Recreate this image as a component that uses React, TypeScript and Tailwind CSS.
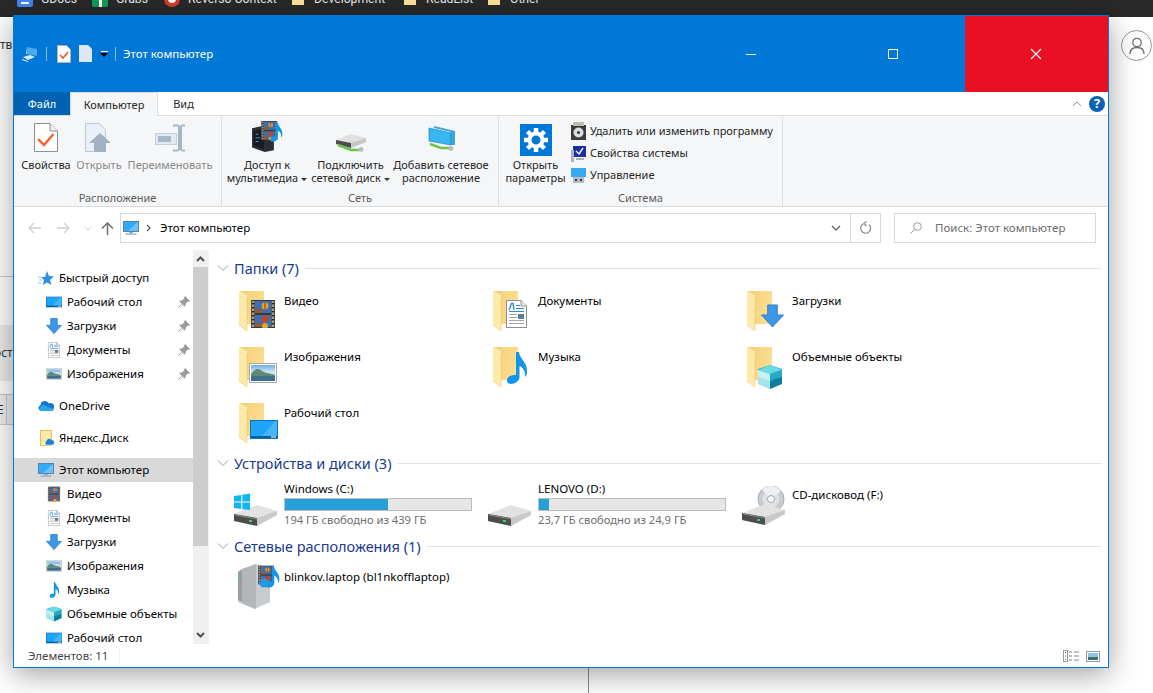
import React from "react";

const FolderBase = ({ children }: { children?: React.ReactNode }) => (
  <svg width="45" height="44" viewBox="0 0 45 44" className="shrink-0">
    <defs>
      <linearGradient id="fb" x1="0" y1="0" x2="1" y2="0.3">
        <stop offset="0" stopColor="#f3cf78" />
        <stop offset="1" stopColor="#fbdd8f" />
      </linearGradient>
    </defs>
    <path d="M0 0H25V33H8V5Z" fill="url(#fb)" />
    <path d="M0 0L8 6V40L0 34Z" fill="#fdeaa9" />
    <path d="M8 6V40L0 34" fill="none" stroke="#eec66c" strokeWidth="0.6" />
    {children}
  </svg>
);

const Film = ({ x, y, w, h }: { x: number; y: number; w: number; h: number }) => (
  <svg x={x} y={y} width={w} height={h} viewBox="0 0 24 28">
    <rect width="24" height="28" fill="#3a3a34" />
    <rect x="0.8" y="1" width="2.6" height="26" fill="#a8a090" />
    <rect x="20.6" y="1" width="2.6" height="26" fill="#a8a090" />
    {[3, 7, 11, 15, 19, 23].map((v) => (
      <g key={v}>
        <rect x="1" y={v} width="2.4" height="1.4" fill="#222" />
        <rect x="20.8" y={v} width="2.4" height="1.4" fill="#222" />
      </g>
    ))}
    <rect x="4" y="1" width="16" height="12" fill="#3f6fb0" />
    <rect x="4" y="15" width="16" height="12" fill="#3f6fb0" />
    <rect x="4" y="9" width="7" height="4" fill="#8d5a3d" />
    <rect x="4" y="23" width="7" height="4" fill="#8d5a3d" />
    <circle cx="14" cy="6" r="3.4" fill="#d9a62a" />
    <rect x="13.4" y="2.6" width="1.2" height="7" fill="#b23a2c" />
    <circle cx="14" cy="19" r="3.4" fill="#c8402e" />
    <circle cx="14" cy="26" r="3" fill="#d9a62a" />
  </svg>
);

const DocPic = ({ x, y, w, h }: { x: number; y: number; w: number; h: number }) => (
  <svg x={x} y={y} width={w} height={h} viewBox="0 0 21 28">
    <path d="M.5.5H15L20.5 6V27.5H.5Z" fill="#fff" stroke="#8f8f8f" />
    <path d="M15 .5V6H20.5" fill="#e8e8e8" stroke="#8f8f8f" />
    <path d="M3 10L5.5 3.5H7L8 10" fill="none" stroke="#2d86d6" strokeWidth="1.3" />
    <rect x="10" y="5" width="4" height="1" fill="#2d86d6" />
    <rect x="10" y="8" width="8" height="1" fill="#2d86d6" />
    <rect x="3" y="11" width="15" height="1" fill="#2d86d6" />
    <rect x="3" y="14" width="8" height="1" fill="#a5a5a5" />
    <rect x="12" y="14" width="6" height="5" fill="#5b7f94" />
    <rect x="3" y="17" width="8" height="1" fill="#a5a5a5" />
    <rect x="3" y="20" width="15" height="1" fill="#a5a5a5" />
    <rect x="3" y="23" width="15" height="1" fill="#a5a5a5" />
  </svg>
);

const DownArr = ({ x, y, w, h }: { x: number; y: number; w: number; h: number }) => (
  <svg x={x} y={y} width={w} height={h} viewBox="0 0 24 24">
    <path d="M7 .5H17V11H23.5L12 23.5L.5 11H7Z" fill="#3d97e6" stroke="#2f7dc6" />
  </svg>
);

const Pic = ({ x, y, w, h }: { x: number; y: number; w: number; h: number }) => (
  <svg x={x} y={y} width={w} height={h} viewBox="0 0 28 20">
    <defs>
      <linearGradient id="sky" x1="0" y1="0" x2="0" y2="1">
        <stop offset="0" stopColor="#6fb0e4" />
        <stop offset="0.5" stopColor="#d8ecf5" />
        <stop offset="1" stopColor="#5a8db0" />
      </linearGradient>
    </defs>
    <rect x="0.5" y="0.5" width="27" height="19" fill="#fff" stroke="#a8a8a8" />
    <rect x="2" y="2" width="24" height="16" fill="url(#sky)" />
    <path d="M2 11C6 5 10 5 13 8C16 10 20 10 26 12V13H2Z" fill="#5f8a70" />
    <rect x="2" y="13" width="24" height="5" fill="#3f6f90" />
  </svg>
);

const Note = ({ x, y, w, h }: { x: number; y: number; w: number; h: number }) => (
  <svg x={x} y={y} width={w} height={h} viewBox="0 0 21 32">
    <path d="M9 0H12C12.5 7 21 10 20 21C19.7 23 19 24 18 25C18.8 19 16 15.5 12.5 14V25C12.5 29 8 32 4 32C1 32 0 30.5 0 28.5C0 25 4 22.5 9 23Z" fill="#1196ea" />
  </svg>
);

const Cube = ({ x, y, w, h }: { x: number; y: number; w: number; h: number }) => (
  <svg x={x} y={y} width={w} height={h} viewBox="0 0 24 24">
    <path d="M12 0L24 4V18L12 24L0 18V4Z" fill="#1eb0c4" />
    <path d="M0 5L12 0L24 5L12 9Z" fill="#69d9e6" />
    <path d="M0 5L12 9V24L0 19Z" fill="#c8f0f2" />
    <path d="M0 12L12 16V24L0 19Z" fill="#a4e4ea" />
    <path d="M12 9L24 5V12L12 16Z" fill="#25a9c6" />
    <path d="M12 16L24 12V19L12 24Z" fill="#0b7f9a" />
  </svg>
);

const DesktopIc = ({ x, y, w, h }: { x: number; y: number; w: number; h: number }) => (
  <svg x={x} y={y} width={w} height={h} viewBox="0 0 28 19">
    <rect width="28" height="19" fill="#0e6fbe" />
    <rect x="1" y="1" width="26" height="15" fill="#1ea5f7" />
    <path d="M12 16L25 1H27V16Z" fill="#45b6fa" />
    <rect x="1" y="16" width="26" height="2" fill="#0a5f9f" />
    <rect x="21" y="16.5" width="5" height="1" fill="#fff" />
  </svg>
);

const PcMonitor = ({ w = 16, h = 16 }: { w?: number; h?: number }) => (
  <svg width={w} height={h} viewBox="0 0 16 16" className="shrink-0">
    <rect x="0.5" y="1.5" width="15" height="10" fill="#36a9f5" stroke="#4f86ad" />
    <path d="M5 11L15 2V11Z" fill="#6cc3f8" />
    <rect x="6" y="12" width="4" height="1.5" fill="#9ab0bf" />
    <rect x="2.5" y="13.5" width="11" height="1.2" fill="#8fa7b8" />
  </svg>
);

const Pin = () => (
  <svg width="12" height="12" viewBox="0 0 12 12" className="shrink-0">
    <path d="M7 0L12 5L10.8 6L10 5.4L7.6 7.8L7.5 10L6.5 10.5L1.5 5.5L2 4.5L4.2 4.4L6.6 2L6 1.2Z" fill="#9b9b9b" />
    <path d="M3.5 8.5L0.5 11.5" stroke="#9b9b9b" />
  </svg>
);

const HddShape = ({ y }: { y: number }) => (
  <svg x="0" y={y} width="44" height="22" viewBox="0 0 44 22">
    <path d="M0 10L23 1L43 7V11L22 22L0 17Z" fill="#e2e2e2" />
    <path d="M0 10L23 14V22L0 17Z" fill="#4c4c4c" />
    <path d="M1 10.5L23 14.5V15.5L1 11.5Z" fill="#8a8a8a" />
    <path d="M23 14L43 7V11L23 22Z" fill="#c9c9c9" />
    <rect x="15" y="16" width="3" height="2" fill="#2fd66a" />
  </svg>
);

const DriveIcon = ({ kind }: { kind: "win" | "plain" | "cd" }) => (
  <svg width="45" height={kind === "cd" ? 41 : 33} viewBox={kind === "cd" ? "0 0 45 41" : "0 0 45 33"} className="shrink-0">
    {kind === "cd" ? (
      <g>
        <circle cx="29" cy="13" r="13" fill="#c9ccd0" stroke="#a9adb2" />
        <circle cx="29" cy="13" r="8.5" fill="#dfe3e6" />
        <path d="M29 13L20 3.5A13 13 0 0 1 39 5Z" fill="#eef0f2" />
        <circle cx="29" cy="13" r="3.5" fill="#fff" stroke="#a0a4a8" />
        <HddShape y={17} />
      </g>
    ) : (
      <HddShape y={11} />
    )}
    {kind === "win" && (
      <g fill="#12b5f0">
        <path d="M0 3L7.3 2V8.5H0Z" />
        <path d="M8.3 1.8L16 .5V8.5H8.3Z" />
        <path d="M0 9.5H7.3V16L0 15Z" />
        <path d="M8.3 9.5H16V17L8.3 16.2Z" />
      </g>
    )}
  </svg>
);

const Chevron = () => (
  <svg width="12" height="8" viewBox="0 0 12 8" className="shrink-0">
    <path d="M1 1.5L6 6.5L11 1.5" fill="none" stroke="#9a9a9a" />
  </svg>
);

const GroupHeader = ({ title }: { title: string }) => (
  <div className="flex h-[18px] items-center pl-[3px]">
    <div className="flex w-[20px] justify-center"><Chevron /></div>
    <span className="ml-px text-[14.5px] leading-[18px] whitespace-nowrap text-[#1a3a8c]">{title}</span>
    <div className="ml-[6px] h-px flex-1 bg-[#e3e3e3]" />
  </div>
);

const FolderItem = ({ name, children }: { name: string; children: React.ReactNode }) => (
  <div className="flex h-[56px] w-[254px] items-start">
    <div className="mt-[2px] w-[45px]"><FolderBase>{children}</FolderBase></div>
    <span className="mt-[4px] text-[11.5px] leading-[16px] text-black">{name}</span>
  </div>
);

const DriveItem = ({ name, pct, free, kind }: { name: string; pct: number; free: string; kind: "win" | "plain" }) => (
  <div className="flex w-[254px]">
    <div className="w-[50px] pt-[13px]"><DriveIcon kind={kind} /></div>
    <div className="flex w-[188px] flex-col">
      <span className="mt-px text-[11.5px] leading-[16px] text-black">{name}</span>
      <div className="mt-px h-[13px] border border-[#bcbcbc] bg-[#e6e6e6]">
        <div className="h-full bg-[#26a0da]" style={{ width: `${pct}%` }} />
      </div>
      <span className="mt-px text-[11.2px] leading-[16px] text-[#6d6d6d]">{free}</span>
    </div>
  </div>
);

const NavRow = ({ icon, label, pin, sel, lvl1 }: { icon: React.ReactNode; label: string; pin?: boolean; sel?: boolean; lvl1?: boolean }) => (
  <div className={`flex h-[24px] shrink-0 items-center ${lvl1 ? "pl-[24px]" : "pl-[32px]"} ${sel ? "bg-[#d9d9d9]" : ""}`}>
    <div className="flex w-[16px] justify-center">{icon}</div>
    <span className="ml-[5px] flex-1 text-[11.5px] leading-[16px] whitespace-nowrap text-black">{label}</span>
    {pin && <div className="mr-[3px]"><Pin /></div>}
  </div>
);

const S16 = ({ children, vb = "0 0 28 28" }: { children: React.ReactNode; vb?: string }) => (
  <svg width="16" height="16" viewBox={vb} className="shrink-0">{children}</svg>
);

const IcDesktop = () => <S16><DesktopIc x={0} y={4} w={28} h={20} /></S16>;
const IcDown = () => <S16><DownArr x={0} y={0} w={28} h={28} /></S16>;
const IcDoc = () => <S16><DocPic x={3} y={0} w={22} h={28} /></S16>;
const IcPic = () => <S16><Pic x={0} y={4} w={28} h={20} /></S16>;
const IcFilm = () => <S16><Film x={3} y={0} w={22} h={28} /></S16>;
const IcNote = () => <S16><Note x={6} y={0} w={18} h={28} /></S16>;
const IcCube = () => <S16><Cube x={0} y={1} w={28} h={26} /></S16>;

const RibbonBtn = ({ w, icon, lines, off, caret }: { w: string; icon: React.ReactNode; lines: string[]; off?: boolean; caret?: boolean }) => (
  <div className={`flex shrink-0 flex-col items-center ${w}`}>
    <div className="flex h-[35px] items-end justify-center">{icon}</div>
    <div className={`mt-[6px] text-center text-[11px] leading-[13px] whitespace-nowrap ${off ? "text-[#8a8a8a]" : "text-[#262626]"}`}>
      {lines.map((l, i) => (
        <div key={l}>
          {l}
          {caret && i === lines.length - 1 && (
            <span className="ml-[3px] inline-block h-0 w-0 border-x-[3px] border-t-[3px] border-x-transparent border-t-[#333] align-middle" />
          )}
        </div>
      ))}
    </div>
  </div>
);

const RibbonGroup = ({ w, label, children }: { w: string; label: string; children: React.ReactNode }) => (
  <div className={`flex shrink-0 flex-col border-r border-[#dcdddf] ${w}`}>
    <div className="flex h-[74px] items-start">{children}</div>
    <div className="text-center text-[11px] leading-[14px] text-[#5c5c5c]">{label}</div>
  </div>
);

const SmallAct = ({ icon, label }: { icon: React.ReactNode; label: string }) => (
  <div className="flex h-[22px] items-center gap-[3px]">
    <div className="w-[16px]">{icon}</div>
    <span className="text-[11px] leading-[14px] whitespace-nowrap text-[#262626]">{label}</span>
  </div>
);

const Bookmark = ({ w, icon, label }: { w: string; icon: React.ReactNode; label: string }) => (
  <div className={`flex shrink-0 items-center ${w}`}>
    {icon}
    <span className="text-[12.2px] leading-[16px] text-[#e8eaed]">{label}</span>
  </div>
);

const BmFolder = () => (
  <svg width="12" height="12" viewBox="0 0 12 12" className="mr-[10px]"><path d="M0 1H5L6.5 3H12V12H0Z" fill="#fbe59a" /></svg>
);

export default function App() {
  return (
    <div className="relative h-[693px] w-[1153px] overflow-hidden bg-white font-['Noto_Sans',sans-serif]">
      {/* browser bookmarks strip */}
      <div className="flex h-[17px] items-start overflow-hidden bg-[#292929] pl-[17px] font-['Roboto',sans-serif]">
        <div className="mt-[-9px] flex">
          <Bookmark w="w-[75px]" label="GDocs" icon={<div className="mr-[8px] flex h-[16px] w-[16px] items-center justify-center rounded-[2px] bg-[#4285f4]"><div className="mt-[8px] h-[2px] w-[8px] bg-white" /></div>} />
          <Bookmark w="w-[72px]" label="Grabs" icon={<div className="mr-[8px] flex h-[16px] w-[16px] justify-center rounded-[2px] bg-[#0f9d58]"><div className="mt-[8px] h-[8px] w-[3px] bg-white" /></div>} />
          <Bookmark w="w-[128px]" label="Reverso Context" icon={<div className="mr-[8px] h-[16px] w-[16px] rounded-full border-[4px] border-[#d63a2e] bg-white" />} />
          <Bookmark w="w-[112px]" label="Development" icon={<BmFolder />} />
          <Bookmark w="w-[84px]" label="ReadList" icon={<BmFolder />} />
          <Bookmark w="w-[60px]" label="Other" icon={<BmFolder />} />
        </div>
      </div>

      {/* desktop remains behind the window */}
      <span className="absolute left-0 top-[37px] text-[12px] leading-[16px] text-[#333]">тв</span>
      <div className="absolute left-0 top-[276px] h-px w-[13px] bg-[#c8c8c8]" />
      <div className="absolute left-0 top-[325px] flex h-[56px] w-[13px] items-center overflow-hidden bg-[#ececec] text-[12px] text-[#333]"><span className="ml-[-6px]">ост</span></div>
      <div className="absolute left-0 top-[394px] flex h-[31px] w-[13px] items-center overflow-hidden border-y border-[#c8c8c8] bg-[#efefef] text-[12px] text-[#333]"><span className="ml-[-3px]">Е</span><div className="ml-[2px] h-full w-px bg-[#c8c8c8]" /></div>
      <div className="absolute left-[588px] top-[660px] h-[33px] w-px bg-[#8c8c8c]" />
      <div className="absolute left-[1121px] top-[30px] flex h-[31px] w-[31px] items-center justify-center rounded-full border border-[#9a9a9a] bg-white">
        <svg width="20" height="20" viewBox="0 0 20 20"><circle cx="10" cy="6.5" r="4.2" fill="none" stroke="#6f6f6f" strokeWidth="1.3" /><path d="M3 18C3 13.5 6 11.5 10 11.5S17 13.5 17 18" fill="none" stroke="#6f6f6f" strokeWidth="1.3" /></svg>
      </div>

      {/* explorer window */}
      <div className="absolute left-[13px] top-[15px] flex h-[653px] w-[1096px] flex-col border border-[#0078d7] bg-white shadow-[0_6px_28px_rgba(0,0,0,0.38)]">
        {/* title bar */}
        <div className="flex h-[76px] shrink-0 items-stretch bg-[#0078d7]">
          <div className="flex w-[668px] items-center pl-[8px] pb-[1px]">
            <svg width="16" height="16" viewBox="0 0 16 16"><path d="M5 1L15 3V10L5 8Z" fill="#4aa8ee" /><path d="M5 1L4 8L5 8Z" fill="#bcd8f2" /><path d="M1 11L8 9L13 11L6 14Z" fill="#dfe8f0" /><path d="M0 13L6 15V16L0 14Z" fill="#eef2f6" /></svg>
            <div className="ml-[8px] h-[14px] w-px bg-[#8ab9e6]" />
            <svg width="14" height="18" viewBox="0 0 14 18" className="ml-[10px]"><path d="M.5.5H9.5L13.5 4.5V17.5H.5Z" fill="#fff" stroke="#b0b0b0" /><path d="M3 10L6 13L11 7" fill="none" stroke="#e8582a" strokeWidth="1.6" /></svg>
            <svg width="13" height="17" viewBox="0 0 13 17" className="ml-[8px]"><path d="M0 0H9L13 4V17H0Z" fill="#dfe7f5" /></svg>
            <div className="ml-[8px] flex flex-col items-center gap-[1px]">
              <div className="h-px w-[7px] bg-white" />
              <div className="h-0 w-0 border-x-[4px] border-t-[4px] border-x-transparent border-t-black" />
            </div>
            <div className="ml-[7px] h-[14px] w-px bg-[#8ab9e6]" />
            <span className="ml-[7px] text-[11.5px] leading-[16px] text-white">Этот компьютер</span>
          </div>
          <div className="flex w-[142px] items-center justify-center">
            <div className="mr-[4px] h-px w-[10px] bg-white" />
          </div>
          <div className="flex w-[141px] items-center justify-center">
            <div className="mr-[4px] h-[10px] w-[10px] border border-white" />
          </div>
          <div className="flex flex-1 items-center justify-center bg-[#e81123] pr-[2px]">
            <svg width="12" height="12" viewBox="0 0 12 12"><path d="M1 1L11 11M11 1L1 11" stroke="#fff" strokeWidth="1.1" /></svg>
          </div>
        </div>

        {/* tabs */}
        <div className="flex h-[23px] shrink-0 items-stretch bg-white text-[11px] leading-[14px]">
          <div className="flex w-[56px] items-center justify-center bg-[#0063b1] text-white">Файл</div>
          <div className="z-10 mb-[-1px] flex w-[88px] items-center justify-center border-x border-t border-[#dadbdc] bg-[#f5f6f7] text-[#262626]">Компьютер</div>
          <div className="flex w-[51px] items-center justify-center text-[#262626]">Вид</div>
          <div className="flex flex-1 items-center justify-end gap-[7px] pr-[3px]">
            <svg width="10" height="6" viewBox="0 0 10 6"><path d="M1 5L5 1L9 5" fill="none" stroke="#9a9a9a" /></svg>
            <div className="flex h-[16px] w-[16px] items-center justify-center rounded-full bg-[#0a63b5] text-[13px] font-bold leading-none text-white">?</div>
          </div>
        </div>

        {/* ribbon */}
        <div className="flex h-[92px] shrink-0 border-y border-[#dadbdc] bg-[#f5f6f7] pt-[1px]">
          <RibbonGroup w="w-[208px]" label="Расположение">
            <div className="flex pl-[7px]">
              <RibbonBtn w="w-[50px]" lines={["Свойства"]} icon={
                <svg width="24" height="29" viewBox="0 0 24 29"><path d="M.5.5H16L23.5 8V28.5H.5Z" fill="#fff" stroke="#8f8f8f" /><path d="M16 .5V8H23.5" fill="#eee" stroke="#8f8f8f" /><path d="M4 16L10 22L19.5 11" fill="none" stroke="#f0622a" strokeWidth="2.4" /></svg>
              } />
              <RibbonBtn w="w-[56px]" off lines={["Открыть"]} icon={
                <svg width="28" height="29" viewBox="0 0 28 29"><path d="M.5.5H14L20.5 7V28.5H.5Z" fill="#eaf0f8" stroke="#b7c7de" /><path d="M9 29V20H4L15 10L26 20H21V29Z" fill="#a2b1c4" /></svg>
              } />
              <RibbonBtn w="w-[86px]" off lines={["Переименовать"]} icon={
                <svg width="30" height="28" viewBox="0 0 30 28"><rect x=".5" y="9.5" width="21" height="11" fill="#e3e9f2" stroke="#c3cfde" /><rect x="3" y="12" width="13" height="6" fill="#a8b8cc" /><path d="M18 .5H23L25 2L27 .5H30V2.5H27V25.5H30V27.5H27L25 26L23 27.5H18V25.5H23V2.5H18Z" fill="#a6b5c8" /></svg>
              } />
            </div>
          </RibbonGroup>
          <RibbonGroup w="w-[277px]" label="Сеть">
            <div className="flex pl-[4px]">
              <RibbonBtn w="w-[82px]" caret lines={["Доступ к", "мультимедиа"]} icon={
                <svg width="31" height="31" viewBox="0 0 34 34"><path d="M0 8L14 5L24 8V32L14 34L0 29Z" fill="#2a2d33" /><path d="M2 11L13 9V31L2 27Z" fill="#161a21" /><rect x="4" y="14" width="3" height="1" fill="#3da2e8" /><rect x="4" y="18" width="5" height="1" fill="#3da2e8" /><rect x="4" y="22" width="3" height="1" fill="#3da2e8" /><Film x={10} y={0} w={18} h={21} /><Note x={20} y={1} w={14} h={22} /></svg>
              } />
              <RibbonBtn w="w-[85px]" caret lines={["Подключить", "сетевой диск"]} icon={
                <svg width="32" height="19" viewBox="0 0 32 19"><path d="M1 7L15 1L31 5V9L16 15L1 11Z" fill="#e0e0e0" /><path d="M1 7L16 10V15L1 11Z" fill="#4c4c4c" /><path d="M16 10L31 5V9L16 15Z" fill="#c6c6c6" /><path d="M3 12L16 17L24 17" fill="none" stroke="#6dc24b" strokeWidth="2.5" /><circle cx="26" cy="16.5" r="2.4" fill="#bbb" /></svg>
              } />
              <RibbonBtn w="w-[96px]" lines={["Добавить сетевое", "расположение"]} icon={
                <svg width="29" height="26" viewBox="0 0 29 26"><path d="M7 0L28 5V19H24V6L7 2Z" fill="#3aa6dd" /><path d="M2 2L24 7V19L2 15Z" fill="#38b6ef" stroke="#1e87bf" strokeWidth=".7" /><path d="M3 18L14 22L24 22" fill="none" stroke="#6dc24b" strokeWidth="2.5" /><circle cx="24" cy="22.5" r="2.4" fill="#bbb" /></svg>
              } />
            </div>
          </RibbonGroup>
          <RibbonGroup w="w-[284px]" label="Система">
            <div className="flex pl-[1px]">
              <div className="flex w-[71px] shrink-0 flex-col items-center">
                <div className="mt-[7px] flex h-[32px] w-[32px] items-center justify-center bg-[#0078d7]">
                  <svg width="26" height="26" viewBox="0 0 26 26"><circle cx="13" cy="13" r="6.5" fill="none" stroke="#fff" strokeWidth="4" /><g stroke="#fff" strokeWidth="4.5"><path d="M13 1V6M13 20V25M1 13H6M20 13H25M4.5 4.5L8 8M18 18L21.5 21.5M21.5 4.5L18 8M8 18L4.5 21.5" /></g></svg>
                </div>
                <div className="mt-[2px] text-center text-[11px] leading-[13px] text-[#262626]"><div>Открыть</div><div>параметры</div></div>
              </div>
              <div className="flex flex-col pt-[3px]">
                <SmallAct label="Удалить или изменить программу" icon={
                  <svg width="15" height="18" viewBox="0 0 15 18"><rect x="0" y="3" width="15" height="15" fill="#3b3b3b" /><rect x="2" y="0" width="11" height="4" fill="#bdbfa8" /><circle cx="7.5" cy="10.5" r="5" fill="#dcdcdc" /><circle cx="7.5" cy="10.5" r="1.5" fill="#333" /></svg>
                } />
                <SmallAct label="Свойства системы" icon={
                  <svg width="15" height="17" viewBox="0 0 15 17"><rect x="2" y="1" width="13" height="11" fill="#1a2ea8" /><path d="M5 6L8 9L12 3" fill="none" stroke="#fff" strokeWidth="1.4" /><rect x="0" y="5" width="3" height="12" fill="#aeb2b5" /><rect x="5" y="13" width="8" height="2" fill="#aeb2b5" /></svg>
                } />
                <SmallAct label="Управление" icon={
                  <svg width="15" height="17" viewBox="0 0 15 17"><rect x="0" y="1" width="15" height="9" fill="#36a9f5" /><rect x="2" y="10" width="11" height="6" fill="#b8bcbf" /><rect x="4" y="12" width="2" height="2" fill="#333" /><rect x="9" y="12" width="2" height="2" fill="#333" /></svg>
                } />
              </div>
            </div>
          </RibbonGroup>
        </div>

        {/* address row */}
        <div className="flex h-[43px] shrink-0 items-center bg-white pb-[1px]">
          <div className="flex w-[106px] items-center pl-[14px]">
            <svg width="13" height="12" viewBox="0 0 13 12"><path d="M6 1L1 6L6 11M1 6H13" fill="none" stroke="#d0d0d0" strokeWidth="1.3" /></svg>
            <svg width="13" height="12" viewBox="0 0 13 12" className="ml-[16px]"><path d="M7 1L12 6L7 11M12 6H0" fill="none" stroke="#d0d0d0" strokeWidth="1.3" /></svg>
            <svg width="8" height="5" viewBox="0 0 8 5" className="ml-[14px]"><path d="M1 1L4 4L7 1" fill="none" stroke="#d0d0d0" /></svg>
            <svg width="13" height="13" viewBox="0 0 13 13" className="ml-[9px]"><path d="M1 6.5L6.5 1L12 6.5M6.5 1V13" fill="none" stroke="#6e6e6e" strokeWidth="1.5" /></svg>
          </div>
          <div className="flex h-[30px] w-[761px] items-center border border-[#d9d9d9]">
            <div className="ml-[2px]"><PcMonitor /></div>
            <svg width="6" height="8" viewBox="0 0 6 8" className="ml-[7px]"><path d="M1 1L4 4L1 7" fill="none" stroke="#555" strokeWidth="1.2" /></svg>
            <span className="ml-[8px] flex-1 text-[11.5px] leading-[16px] text-black">Этот компьютер</span>
            <svg width="10" height="6" viewBox="0 0 10 6" className="mr-[9px]"><path d="M1 1L5 5L9 1" fill="none" stroke="#666" strokeWidth="1.4" /></svg>
            <div className="flex h-full w-[30px] items-center justify-center border-l border-[#d9d9d9]">
              <svg width="12" height="14" viewBox="0 0 12 14"><path d="M9 3.5A5 5 0 1 1 4 2.5M4 2.5L6.5 .5M4 2.5L6.5 5" fill="none" stroke="#8a8a8a" strokeWidth="1.2" /></svg>
            </div>
          </div>
          <div className="ml-[13px] flex h-[30px] w-[202px] items-center border border-[#d9d9d9] pl-[15px]">
            <svg width="12" height="12" viewBox="0 0 12 12"><circle cx="7.5" cy="4.5" r="3.8" fill="none" stroke="#9a9a9a" /><path d="M4.7 7.3L.5 11.5" stroke="#b08a80" /></svg>
            <span className="ml-[13px] text-[11.5px] leading-[16px] text-[#6d6d6d]">Поиск: Этот компьютер</span>
          </div>
        </div>

        {/* main */}
        <div className="flex min-h-0 flex-1">
          {/* nav */}
          <div className="flex h-[394px] w-[179px] shrink-0 flex-col overflow-hidden pt-[16px]">
            <NavRow lvl1 label="Быстрый доступ" icon={<svg width="16" height="16" viewBox="0 0 16 16"><path d="M9 1L11 6L16 6.5L12 10L13.5 15L9 12.5L5 15L6 10L3 7H7Z" fill="#2f8fe6" /><path d="M0 7H3M1 10H4M0 13H3" stroke="#8bbfec" /></svg>} />
            <NavRow label="Рабочий стол" pin icon={<IcDesktop />} />
            <NavRow label="Загрузки" pin icon={<IcDown />} />
            <NavRow label="Документы" pin icon={<IcDoc />} />
            <NavRow label="Изображения" pin icon={<IcPic />} />
            <div className="h-[8px] shrink-0" />
            <NavRow lvl1 label="OneDrive" icon={<svg width="16" height="16" viewBox="0 0 16 16"><path d="M3 13A3 3 0 0 1 2.5 7.2A4.5 4.5 0 0 1 11 5.5A3.6 3.6 0 0 1 15.8 10.5A2.6 2.6 0 0 1 13.5 13Z" fill="#1478cf" /><path d="M3 13A2.5 2.5 0 0 1 3 8.5C5 6.5 8 7 9.5 9L15.8 10.5A2.6 2.6 0 0 1 13.5 13Z" fill="#28a8ea" /></svg>} />
            <div className="h-[8px] shrink-0" />
            <NavRow lvl1 label="Яндекс.Диск" icon={<svg width="16" height="16" viewBox="0 0 16 16"><rect x="2.5" y="0.5" width="11" height="15" fill="#fde9a8" stroke="#e6c25d" /><path d="M8 15A3 3 0 0 1 8.5 10.5A3 3 0 0 1 14 10A2.5 2.5 0 0 1 14 15Z" fill="#1d7fd4" stroke="#fff" strokeWidth=".5" /></svg>} />
            <div className="h-[8px] shrink-0" />
            <NavRow lvl1 sel label="Этот компьютер" icon={<PcMonitor />} />
            <NavRow label="Видео" icon={<IcFilm />} />
            <NavRow label="Документы" icon={<IcDoc />} />
            <NavRow label="Загрузки" icon={<IcDown />} />
            <NavRow label="Изображения" icon={<IcPic />} />
            <NavRow label="Музыка" icon={<IcNote />} />
            <NavRow label="Объемные объекты" icon={<IcCube />} />
            <NavRow label="Рабочий стол" icon={<IcDesktop />} />
          </div>
          {/* scrollbar */}
          <div className="flex h-[394px] w-[15px] shrink-0 flex-col bg-[#f0f0f0]">
            <div className="flex h-[17px] items-center justify-center">
              <svg width="9" height="6" viewBox="0 0 9 6"><path d="M1 5L4.5 1.5L8 5" fill="none" stroke="#505050" strokeWidth="2" /></svg>
            </div>
            <div className="h-[279px] bg-[#cdcdcd]" />
            <div className="flex flex-1 items-end justify-center pb-[6px]">
              <svg width="9" height="6" viewBox="0 0 9 6"><path d="M1 1L4.5 4.5L8 1" fill="none" stroke="#505050" strokeWidth="2" /></svg>
            </div>
          </div>
          {/* content */}
          <div className="flex min-w-0 flex-1 flex-col border-l border-[#f2f2f2] pl-[1px] pr-[7px] pt-[9px]">
            <GroupHeader title="Папки (7)" />
            <div className="mt-[12px] flex flex-wrap pl-[29px]">
              <FolderItem name="Видео"><Film x={12} y={9} w={24} h={28} /></FolderItem>
              <FolderItem name="Документы"><DocPic x={13} y={9} w={21} h={28} /></FolderItem>
              <FolderItem name="Загрузки"><DownArr x={14} y={13} w={23} h={24} /></FolderItem>
              <FolderItem name="Изображения"><Pic x={10} y={16} w={28} h={20} /></FolderItem>
              <FolderItem name="Музыка"><Note x={14} y={5} w={21} h={32} /></FolderItem>
              <FolderItem name="Объемные объекты"><Cube x={11} y={18} w={24} h={24} /></FolderItem>
              <FolderItem name="Рабочий стол"><DesktopIc x={11} y={17} w={28} h={19} /></FolderItem>
            </div>
            <div className="mt-[-3px]"><GroupHeader title="Устройства и диски (3)" /></div>
            <div className="mt-[8px] flex pl-[24px]">
              <DriveItem kind="win" name="Windows (C:)" pct={55.5} free="194 ГБ свободно из 439 ГБ" />
              <DriveItem kind="plain" name="LENOVO (D:)" pct={5.5} free="23,7 ГБ свободно из 24,9 ГБ" />
              <div className="flex">
                <div className="w-[50px] pt-[6px]"><DriveIcon kind="cd" /></div>
                <span className="mt-[7px] text-[11.5px] leading-[16px] text-black">CD-дисковод (F:)</span>
              </div>
            </div>
            <div className="mt-[9px]"><GroupHeader title="Сетевые расположения (1)" /></div>
            <div className="mt-[7px] flex pl-[28px]">
              <svg width="46" height="48" viewBox="0 0 46 48" className="shrink-0">
                <path d="M4 7L18 2L32 6V40L16 47L0 40Z" fill="#c9cccf" />
                <path d="M0 10L4 7V40L0 38Z" fill="#9b9ea1" />
                <path d="M1 12H3V16H1Z" fill="#56c25c" />
                <path d="M4 7L18 2V47L4 41Z" fill="#b4b7ba" />
                <Film x={20} y={3} w={16} h={20} />
                <Note x={28} y={3} w={14} h={24} />
                <circle cx="26" cy="21" r="4.5" fill="#2b97dd" />
              </svg>
              <span className="mt-[7px] text-[11.5px] leading-[16px] text-black">blinkov.laptop (bl1nkofflaptop)</span>
            </div>
          </div>
        </div>

        {/* status */}
        <div className="flex h-[22px] shrink-0 items-center bg-white pl-[14px] pr-[8px]">
          <span className="text-[11.5px] leading-[16px] text-[#444]">Элементов: 11</span>
          <div className="ml-[11px] h-[14px] w-px bg-[#ededed]" />
          <div className="ml-auto flex items-center gap-[7px]">
            <svg width="16" height="12" viewBox="0 0 16 12"><rect x=".5" y=".5" width="4" height="11" fill="#fff" stroke="#9a9a9a" /><rect x="2" y="2" width="1" height="1" fill="#333" /><rect x="2" y="5.5" width="1" height="1" fill="#3d7cc9" /><rect x="2" y="9" width="1" height="1" fill="#d0342c" /><path d="M6 2H9M11 2H16M6 6H9M11 6H16M6 10H9M11 10H16" stroke="#808080" /></svg>
            <svg width="14" height="11" viewBox="0 0 14 11"><rect x=".5" y=".5" width="13" height="10" fill="#fff" stroke="#9a9a9a" /><rect x="2" y="2" width="10" height="4" fill="#8fc3ea" /><rect x="2" y="6" width="10" height="3" fill="#3f6f70" /></svg>
          </div>
        </div>
      </div>
    </div>
  );
}
